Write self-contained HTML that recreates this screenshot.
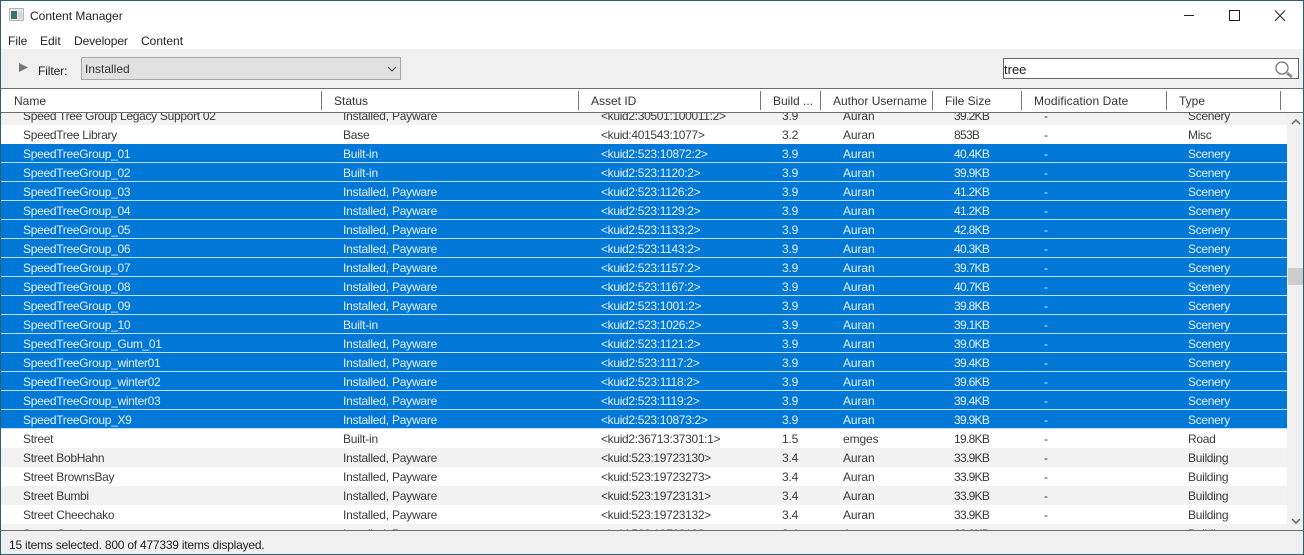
<!DOCTYPE html>
<html><head><meta charset="utf-8"><title>Content Manager</title>
<style>
html,body{margin:0;padding:0;background:#fff}
#w{position:relative;width:1304px;height:555px;overflow:hidden;background:#fff;font:12px/19px "Liberation Sans",sans-serif;color:#3a3a3a;box-sizing:border-box}
#w div,#w span{position:absolute;white-space:nowrap}
.b{background:#2f5d70}
.r{left:0;width:1286px;height:19px}
.g{background:#f2f2f2}
.s{background:#0078d7;color:#e6f2fb;height:18px;border-bottom:1px solid #bfe0f6}
.r span{top:1px}
.a{left:22px;letter-spacing:-.3px}.c{left:342px;letter-spacing:-.22px}.d{left:600px;letter-spacing:-.33px}.e{left:781px;letter-spacing:-.2px}.f{left:842px;letter-spacing:-.1px}.h{left:953px;letter-spacing:-.7px}.i{left:1043px}.j{left:1187px;letter-spacing:-.3px}
.t{color:#222}
.hd{top:92px;color:#333}
.sp{top:91px;width:1px;height:19px;background:#777}
</style></head><body>
<div id="w">
<div style="left:1px;top:49px;width:1302px;height:39px;background:#f0f0f0"></div>
<div style="left:1px;top:88px;width:1302px;height:1px;background:#6e6e6e"></div>
<div style="left:1px;top:112px;width:1302px;height:1px;background:#6e6e6e"></div>

<svg style="position:absolute;left:9px;top:8px" width="16" height="14"><rect x=".5" y=".5" width="14" height="12" fill="#e8e8e8" stroke="#b5b5b5"/><rect x="2" y="3" width="6" height="8" fill="#3f7168"/><rect x="9" y="3" width="4" height="8" fill="#cfd6d8"/></svg>
<span class="t" style="left:30px;top:7px">Content Manager</span>
<span class="t" style="left:8px;top:32px">File</span>
<span class="t" style="left:40px;top:32px">Edit</span>
<span class="t" style="left:74px;top:32px;letter-spacing:-.1px">Developer</span>
<span class="t" style="left:141px;top:32px">Content</span>

<svg style="position:absolute;left:1170px;top:6px" width="125" height="20" fill="none" stroke="#222"><path d="M14 9.5H24"/><rect x="59.5" y="4.5" width="10" height="10"/><path d="M105 4.5L115 15M115 4.5L105 15"/></svg>

<svg style="position:absolute;left:18px;top:62px" width="12" height="12"><path d="M1 1L10 5.5L1 10Z" fill="#777"/></svg>
<span class="t" style="left:38px;top:62px;letter-spacing:-.1px">Filter:</span>
<div style="left:81px;top:57px;width:315px;height:21px;background:#e1e1e1;border:1px solid #a8a8a8;line-height:23px;padding-left:3px;color:#333">Installed</div>
<svg style="position:absolute;left:387px;top:66px" width="10" height="7" fill="none" stroke="#444"><path d="M1 1L5 5L9 1"/></svg>

<div style="left:1003px;top:58px;background:#fff;border:1px solid #666;line-height:22px;color:#222;font-size:13px;box-sizing:border-box;width:296px;height:21px">tree</div>
<svg style="position:absolute;left:1273px;top:60px" width="23" height="20" fill="none"><circle cx="9" cy="8" r="6" fill="#fff" stroke="#777" stroke-width="1.3"/><path d="M14 13L19 17" stroke="#8a8a8a" stroke-width="3"/></svg>

<span class="hd" style="left:14px">Name</span><div class="sp" style="left:321px"></div>
<span class="hd" style="left:334px">Status</span><div class="sp" style="left:578px"></div>
<span class="hd" style="left:591px">Asset ID</span><div class="sp" style="left:760px"></div>
<span class="hd" style="left:773px">Build ...</span><div class="sp" style="left:820px"></div>
<span class="hd" style="left:833px">Author Username</span><div class="sp" style="left:932px"></div>
<span class="hd" style="left:945px">File Size</span><div class="sp" style="left:1021px"></div>
<span class="hd" style="left:1034px;letter-spacing:.1px">Modification Date</span><div class="sp" style="left:1166px"></div>
<span class="hd" style="left:1179px">Type</span><div class="sp" style="left:1280px"></div>

<div style="left:1px;top:113px;width:1286px;height:417px;overflow:hidden">
<div class="r g" style="top:-7px"><span class="a">Speed Tree Group Legacy Support 02</span><span class="c">Installed, Payware</span><span class="d">&lt;kuid2:30501:100011:2&gt;</span><span class="e">3.9</span><span class="f">Auran</span><span class="h">39.2KB</span><span class="i">-</span><span class="j">Scenery</span></div>
<div class="r" style="top:12px"><span class="a">SpeedTree Library</span><span class="c">Base</span><span class="d">&lt;kuid:401543:1077&gt;</span><span class="e">3.2</span><span class="f">Auran</span><span class="h">853B</span><span class="i">-</span><span class="j">Misc</span></div>
<div class="r s" style="top:31px"><span class="a">SpeedTreeGroup_01</span><span class="c">Built-in</span><span class="d">&lt;kuid2:523:10872:2&gt;</span><span class="e">3.9</span><span class="f">Auran</span><span class="h">40.4KB</span><span class="i">-</span><span class="j">Scenery</span></div>
<div class="r s" style="top:50px"><span class="a">SpeedTreeGroup_02</span><span class="c">Built-in</span><span class="d">&lt;kuid2:523:1120:2&gt;</span><span class="e">3.9</span><span class="f">Auran</span><span class="h">39.9KB</span><span class="i">-</span><span class="j">Scenery</span></div>
<div class="r s" style="top:69px"><span class="a">SpeedTreeGroup_03</span><span class="c">Installed, Payware</span><span class="d">&lt;kuid2:523:1126:2&gt;</span><span class="e">3.9</span><span class="f">Auran</span><span class="h">41.2KB</span><span class="i">-</span><span class="j">Scenery</span></div>
<div class="r s" style="top:88px"><span class="a">SpeedTreeGroup_04</span><span class="c">Installed, Payware</span><span class="d">&lt;kuid2:523:1129:2&gt;</span><span class="e">3.9</span><span class="f">Auran</span><span class="h">41.2KB</span><span class="i">-</span><span class="j">Scenery</span></div>
<div class="r s" style="top:107px"><span class="a">SpeedTreeGroup_05</span><span class="c">Installed, Payware</span><span class="d">&lt;kuid2:523:1133:2&gt;</span><span class="e">3.9</span><span class="f">Auran</span><span class="h">42.8KB</span><span class="i">-</span><span class="j">Scenery</span></div>
<div class="r s" style="top:126px"><span class="a">SpeedTreeGroup_06</span><span class="c">Installed, Payware</span><span class="d">&lt;kuid2:523:1143:2&gt;</span><span class="e">3.9</span><span class="f">Auran</span><span class="h">40.3KB</span><span class="i">-</span><span class="j">Scenery</span></div>
<div class="r s" style="top:145px"><span class="a">SpeedTreeGroup_07</span><span class="c">Installed, Payware</span><span class="d">&lt;kuid2:523:1157:2&gt;</span><span class="e">3.9</span><span class="f">Auran</span><span class="h">39.7KB</span><span class="i">-</span><span class="j">Scenery</span></div>
<div class="r s" style="top:164px"><span class="a">SpeedTreeGroup_08</span><span class="c">Installed, Payware</span><span class="d">&lt;kuid2:523:1167:2&gt;</span><span class="e">3.9</span><span class="f">Auran</span><span class="h">40.7KB</span><span class="i">-</span><span class="j">Scenery</span></div>
<div class="r s" style="top:183px"><span class="a">SpeedTreeGroup_09</span><span class="c">Installed, Payware</span><span class="d">&lt;kuid2:523:1001:2&gt;</span><span class="e">3.9</span><span class="f">Auran</span><span class="h">39.8KB</span><span class="i">-</span><span class="j">Scenery</span></div>
<div class="r s" style="top:202px"><span class="a">SpeedTreeGroup_10</span><span class="c">Built-in</span><span class="d">&lt;kuid2:523:1026:2&gt;</span><span class="e">3.9</span><span class="f">Auran</span><span class="h">39.1KB</span><span class="i">-</span><span class="j">Scenery</span></div>
<div class="r s" style="top:221px"><span class="a">SpeedTreeGroup_Gum_01</span><span class="c">Installed, Payware</span><span class="d">&lt;kuid2:523:1121:2&gt;</span><span class="e">3.9</span><span class="f">Auran</span><span class="h">39.0KB</span><span class="i">-</span><span class="j">Scenery</span></div>
<div class="r s" style="top:240px"><span class="a">SpeedTreeGroup_winter01</span><span class="c">Installed, Payware</span><span class="d">&lt;kuid2:523:1117:2&gt;</span><span class="e">3.9</span><span class="f">Auran</span><span class="h">39.4KB</span><span class="i">-</span><span class="j">Scenery</span></div>
<div class="r s" style="top:259px"><span class="a">SpeedTreeGroup_winter02</span><span class="c">Installed, Payware</span><span class="d">&lt;kuid2:523:1118:2&gt;</span><span class="e">3.9</span><span class="f">Auran</span><span class="h">39.6KB</span><span class="i">-</span><span class="j">Scenery</span></div>
<div class="r s" style="top:278px"><span class="a">SpeedTreeGroup_winter03</span><span class="c">Installed, Payware</span><span class="d">&lt;kuid2:523:1119:2&gt;</span><span class="e">3.9</span><span class="f">Auran</span><span class="h">39.4KB</span><span class="i">-</span><span class="j">Scenery</span></div>
<div class="r s" style="top:297px"><span class="a">SpeedTreeGroup_X9</span><span class="c">Installed, Payware</span><span class="d">&lt;kuid2:523:10873:2&gt;</span><span class="e">3.9</span><span class="f">Auran</span><span class="h">39.9KB</span><span class="i">-</span><span class="j">Scenery</span></div>
<div class="r" style="top:316px"><span class="a">Street</span><span class="c">Built-in</span><span class="d">&lt;kuid2:36713:37301:1&gt;</span><span class="e">1.5</span><span class="f">emges</span><span class="h">19.8KB</span><span class="i">-</span><span class="j">Road</span></div>
<div class="r g" style="top:335px"><span class="a">Street BobHahn</span><span class="c">Installed, Payware</span><span class="d">&lt;kuid:523:19723130&gt;</span><span class="e">3.4</span><span class="f">Auran</span><span class="h">33.9KB</span><span class="i">-</span><span class="j">Building</span></div>
<div class="r" style="top:354px"><span class="a">Street BrownsBay</span><span class="c">Installed, Payware</span><span class="d">&lt;kuid:523:19723273&gt;</span><span class="e">3.4</span><span class="f">Auran</span><span class="h">33.9KB</span><span class="i">-</span><span class="j">Building</span></div>
<div class="r g" style="top:373px"><span class="a">Street Bumbi</span><span class="c">Installed, Payware</span><span class="d">&lt;kuid:523:19723131&gt;</span><span class="e">3.4</span><span class="f">Auran</span><span class="h">33.9KB</span><span class="i">-</span><span class="j">Building</span></div>
<div class="r" style="top:392px"><span class="a">Street Cheechako</span><span class="c">Installed, Payware</span><span class="d">&lt;kuid:523:19723132&gt;</span><span class="e">3.4</span><span class="f">Auran</span><span class="h">33.9KB</span><span class="i">-</span><span class="j">Building</span></div>
<div class="r g" style="top:411px"><span class="a">Street Castle</span><span class="c">Installed, Payware</span><span class="d">&lt;kuid:523:19723133&gt;</span><span class="e">3.4</span><span class="f">Auran</span><span class="h">33.9KB</span><span class="i">-</span><span class="j">Building</span></div>
</div>

<div style="left:1287px;top:113px;width:16px;height:417px;background:#f0f0f0"></div>
<div style="left:1288px;top:268px;width:15px;height:17px;background:#cdcdcd"></div>
<svg style="position:absolute;left:1291px;top:118px" width="10" height="8" fill="none" stroke="#666" stroke-width="1.5"><path d="M1 6L5 2L9 6"/></svg>
<svg style="position:absolute;left:1291px;top:517px" width="10" height="8" fill="none" stroke="#666" stroke-width="1.5"><path d="M1 2L5 6L9 2"/></svg>

<div style="left:1px;top:530px;width:1302px;height:1px;background:#6e6e6e"></div>
<div style="left:1px;top:531px;width:1302px;height:23px;background:#f0f0f0"></div>
<span class="t" style="left:9px;top:536px;letter-spacing:-.22px">15 items selected. 800 of 477339 items displayed.</span>

<div class="b" style="left:0;top:0;width:1304px;height:1px"></div>
<div class="b" style="left:0;top:554px;width:1304px;height:1px"></div>
<div class="b" style="left:0;top:0;width:1px;height:555px"></div>
<div class="b" style="left:1303px;top:0;width:1px;height:555px"></div>
</div>
</body></html>
